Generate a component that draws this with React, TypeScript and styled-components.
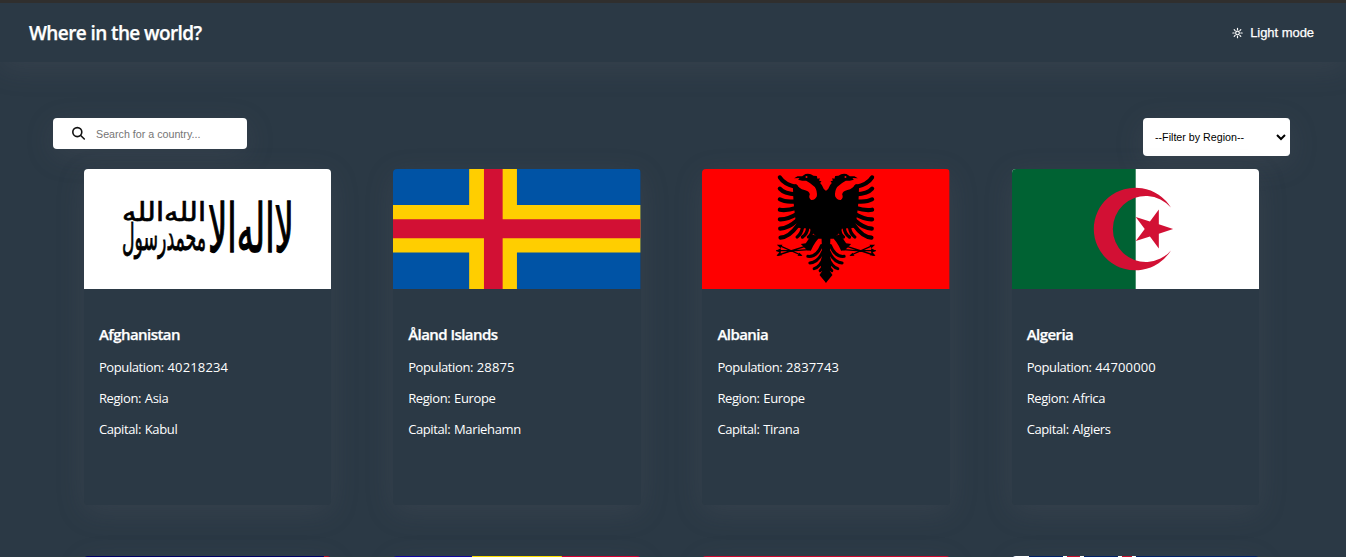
import React from "react";
import styled, { createGlobalStyle } from "styled-components";

const GlobalStyle = createGlobalStyle`
  *, *::before, *::after { box-sizing: border-box; }
  html, body { margin: 0; height: 100%; overflow: hidden; }
  body {
    background: #2b3945;
    color: #fff;
    font-family: "Open Sans", "Noto Sans", sans-serif;
  }
`;

const shadow = "rgba(100, 100, 111, 0.2) 0 7px 29px 0";

const Page = styled.div`
  height: 557px;
  overflow: hidden;
  border-top: 3px solid #302f2e;
`;

const Header = styled.header`
  display: flex;
  align-items: center;
  justify-content: space-between;
  height: 59px;
  padding: 0 32px 0 29px;
  background: #2b3945;
  box-shadow: ${shadow};
`;

const Title = styled.h1`
  margin: 0;
  font-size: 19px;
  font-weight: 600;
  line-height: 26px;
  letter-spacing: -0.6px;
  white-space: nowrap;
  -webkit-text-stroke: 0.25px #fff;
`;

const ModeButton = styled.button`
  display: flex;
  align-items: center;
  gap: 7px;
  padding: 0;
  border: 0;
  background: none;
  color: #fff;
  font: 13px "Liberation Sans", Arial, sans-serif;
  letter-spacing: -0.05px;
  -webkit-text-stroke: 0.25px #fff;
`;

const Main = styled.main`
  padding: 56px 56px 0 53px;
`;

const Controls = styled.div`
  display: flex;
  align-items: flex-start;
  justify-content: space-between;
  height: 51px;
`;

const SearchBox = styled.label`
  display: flex;
  align-items: center;
  gap: 10px;
  width: 194px;
  height: 31px;
  padding-left: 18px;
  border-radius: 4px;
  background: #fff;
  color: #111;
  box-shadow: ${shadow};
`;

const SearchInput = styled.input`
  width: 130px;
  padding: 0;
  border: 0;
  outline: 0;
  background: transparent;
  font: 10.7px "Liberation Sans", Arial, sans-serif;
  &::placeholder { color: #757575; }
`;

const RegionSelect = styled.select`
  width: 147px;
  height: 38px;
  padding: 0 0 0 8px;
  border: 0;
  border-right: 1px solid #fff;
  border-radius: 4px;
  background: #fff;
  color: #000;
  font: 10.7px "Liberation Sans", Arial, sans-serif;
  box-shadow: ${shadow};
`;

const CardGrid = styled.section`
  display: grid;
  grid-template-columns: repeat(4, 1fr);
  justify-items: center;
  row-gap: 51px;
`;

const Card = styled.article`
  width: 80%;
  height: 336px;
  border-radius: 4px;
  background: #2b3945;
  box-shadow: ${shadow};
`;

const Flag = styled.svg`
  display: block;
  width: 100%;
  height: 120px;
  border-radius: 4px 4px 0 0;
`;

const Details = styled.div`
  padding: 34px 15px 0;
`;

const CountryName = styled.h2`
  margin: 0 0 13px;
  font-size: 15px;
  font-weight: 600;
  line-height: 22px;
  letter-spacing: -0.55px;
  -webkit-text-stroke: 0.25px #fff;
`;

const Fact = styled.p`
  margin: 0 0 13px;
  font-size: 13px;
  line-height: 18px;
  letter-spacing: -0.4px;
  word-spacing: 0.8px;
`;

const Value = styled.span<{ $numeric?: boolean }>`
  letter-spacing: ${(p) => (p.$numeric ? "0.15px" : "-0.35px")};
`;

const SunIcon = () => (
  <svg width="11" height="12" viewBox="0 0 12 12" fill="none" stroke="currentColor" strokeWidth="1.3" strokeLinecap="round">
    <circle cx="6" cy="6" r="2" />
    <path d="M6 .9v1.5M6 9.6v1.5M.9 6h1.5M9.6 6h1.5M2.4 2.4l1 1M8.6 8.6l1 1M2.4 9.6l1-1M8.6 3.4l1-1" />
  </svg>
);

const SearchIcon = () => (
  <svg width="15" height="15" viewBox="0 0 15 15" fill="none" stroke="currentColor" strokeWidth="1.6" strokeLinecap="round">
    <circle cx="6.3" cy="6.1" r="4.5" />
    <path d="M9.7 9.5l3.6 3.5" />
  </svg>
);

const flagBox = { viewBox: "0 0 247.5 120", preserveAspectRatio: "none" };

type Piece = { words: string[]; x: number; y: number; w: number; size: number; sy: number };

// Words are set tight, with a zero-width non-joiner between them.
const script: Piece[] = [
  { words: ["لا", "اله", "الا"], x: 124, y: 83, w: 86, size: 28, sy: 2.4 },
  { words: ["محمد", "رسول"], x: 38, y: 81, w: 84, size: 24, sy: 1.55 },
  { words: ["الله", "الله"], x: 38, y: 52, w: 84, size: 24, sy: 1.1 },
];

const AfghanistanFlag = () => (
  <Flag {...flagBox}>
    <rect width="247.5" height="120" fill="#fff" />
    <g fill="#000" stroke="#000" strokeWidth=".6" fontFamily='"DejaVu Sans", sans-serif'>
      {script.map((p) => (
        <text
          key={p.y}
          transform={`translate(${p.x} ${p.y}) scale(1 ${p.sy})`}
          fontSize={p.size}
          textLength={p.w}
          lengthAdjust="spacingAndGlyphs"
        >
          {p.words.join("\u200c")}
        </text>
      ))}
    </g>
  </Flag>
);

const AlandFlag = () => (
  <Flag {...flagBox}>
    <rect width="247.5" height="120" fill="#0053a5" />
    <path d="M76.2 0H124V120H76.2zM0 36H247.5V83.5H0z" fill="#ffce00" />
    <path d="M91 0H109.7V120H91zM0 50.3H247.5V69.3H0z" fill="#d21034" />
  </Flag>
);

const EagleHalf = () => (
  <g>
    <path d="M198 78L191 72L185 60L180 54L184 49L177 47L179 40L172 41L170 33L160 32Q150 24 136 27L126 34L112 34L102 40L118 39L114 44L126 47L138 47Q152 54 164 66Q172 78 170 94Q165 106 153 105Q144 99 149 88Q147 78 133 75Q116 71 108 57L98 60L100 110L106 165L112 188L150 191L160 207L176 221H198Z" />
    <g fill="none" stroke="#000" strokeWidth="12.5" strokeLinecap="round">
      <path d="M59 37Q72 58 108 66" />
      <path d="M59 71Q72 86 108 88" />
      <path d="M59 103Q74 112 108 109" />
      <path d="M59 134Q78 138 110 128" />
      <path d="M59 163Q82 164 110 147" />
      <path d="M60 191Q84 190 110 167" />
      <path d="M61 218Q88 216 112 182" />
    </g>
    <g fill="none" stroke="#000" strokeWidth="10" strokeLinecap="round">
      <path d="M111 216Q124 207 127 187" />
      <path d="M127 216Q141 207 143 187" />
      <path d="M145 216Q156 208 156 192" />
    </g>
    <path d="M155 208L180 216Q165 228 152 257L141 256L122 237L137 235Z" />
    <path d="M184 214H198V354L178 330L186 318L181 300L186 268Z" />
    <g fill="none" stroke="#000" strokeWidth="9" strokeLinecap="round">
      <path d="M143 274Q170 277 184 242" />
      <path d="M149 294Q174 292 188 260" />
      <path d="M162 311Q180 305 190 280" />
      <path d="M180 317Q188 310 192 292" />
    </g>
    <g fill="none" stroke="#000" strokeWidth="4" strokeLinecap="round">
      <path d="M135 244L54 270M58 242L122 270M50 257H105L145 254" />
    </g>
    <path d="M47 257L62 250V264ZM49 273L58 261L66 271ZM50 239L67 239L61 250ZM127 273L112 272L118 263Z" />
    <circle cx="139" cy="36" r="3" fill="#f00" />
  </g>
);

const AlbaniaFlag = () => (
  <Flag {...flagBox}>
    <rect width="247.5" height="120" fill="#f00" />
    <g transform="translate(58.2 -4) scale(.33333)">
      <EagleHalf />
      <g transform="translate(395 0) scale(-1 1)"><EagleHalf /></g>
    </g>
  </Flag>
);

const AlgeriaFlag = () => (
  <Flag {...flagBox}>
    <rect width="247.5" height="120" fill="#fff" />
    <rect width="123.75" height="120" fill="#006233" />
    <path d="M159 38.6A41.6 41.3 0 1 0 159 81.4A33 33 0 1 1 159 38.6Z" fill="#d21034" />
    <path d="M161.2 60L146.9 55.3V40.4L138 52.4L123.8 47.9L132.8 60L123.8 72.1L138 67.6L146.9 79.6V64.7Z" fill="#d21034" />
  </Flag>
);

type Stripe = [number, number, string];

const StripeFlag = ({ base, stripes = [] }: { base: string; stripes?: Stripe[] }) => (
  <Flag {...flagBox}>
    <rect width="247.5" height="120" fill={base} />
    {stripes.map(([x, w, color]) => (
      <rect key={x} x={x} width={w} height="120" fill={color} />
    ))}
  </Flag>
);

const countries = [
  { name: "Afghanistan", population: 40218234, region: "Asia", capital: "Kabul", flag: <AfghanistanFlag /> },
  { name: "Åland Islands", population: 28875, region: "Europe", capital: "Mariehamn", flag: <AlandFlag /> },
  { name: "Albania", population: 2837743, region: "Europe", capital: "Tirana", flag: <AlbaniaFlag /> },
  { name: "Algeria", population: 44700000, region: "Africa", capital: "Algiers", flag: <AlgeriaFlag /> },
];

const nextRow = [
  <StripeFlag base="#000066" stripes={[[240, 8, "#bd1021"]]} />,
  <StripeFlag base="#10069f" stripes={[[79, 90, "#fedd00"], [169, 79, "#d50032"]]} />,
  <StripeFlag base="#cc092f" />,
  <StripeFlag
    base="#012169"
    stripes={[[0, 17, "#fff"], [51, 21, "#fff"], [55, 13, "#c8102e"], [106, 18, "#fff"], [110, 10, "#c8102e"]]}
  />,
];

export default function App() {
  return (
    <>
      <GlobalStyle />
      <Page>
        <Header>
          <Title>Where in the world?</Title>
          <ModeButton><SunIcon />Light mode</ModeButton>
        </Header>
        <Main>
          <Controls>
            <SearchBox>
              <SearchIcon />
              <SearchInput placeholder="Search for a country..." />
            </SearchBox>
            <RegionSelect>
              <option>--Filter by Region--</option>
            </RegionSelect>
          </Controls>
          <CardGrid>
            {countries.map((c) => (
              <Card key={c.name}>
                {c.flag}
                <Details>
                  <CountryName>{c.name}</CountryName>
                  <Fact>Population: <Value $numeric>{c.population}</Value></Fact>
                  <Fact>Region: <Value>{c.region}</Value></Fact>
                  <Fact>Capital: <Value>{c.capital}</Value></Fact>
                </Details>
              </Card>
            ))}
            {nextRow.map((flag, i) => (
              <Card key={i}>{flag}</Card>
            ))}
          </CardGrid>
        </Main>
      </Page>
    </>
  );
}
